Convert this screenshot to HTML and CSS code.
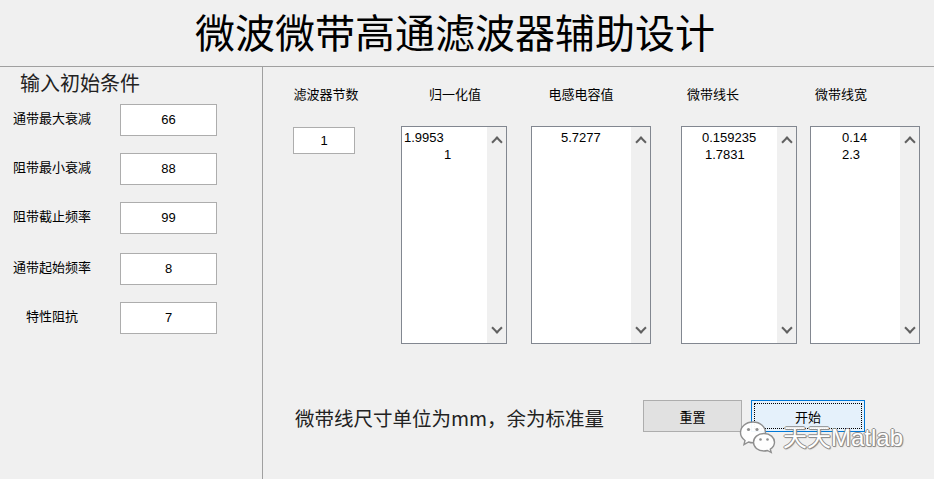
FILE: index.html
```html
<!DOCTYPE html>
<html lang="zh-CN">
<head>
<meta charset="utf-8">
<title>微波微带高通滤波器辅助设计</title>
<link rel="stylesheet" href="styles.css">
</head>
<body>
<div class="app">
  <header class="title">微波微带高通滤波器辅助设计</header>
  <div class="main">
    <section class="left">
      <h2 class="heading">输入初始条件</h2>
      <div class="rows">
        <div class="row"><span class="label">通带最大衰减</span><div class="edit">66</div></div>
        <div class="row"><span class="label">阻带最小衰减</span><div class="edit">88</div></div>
        <div class="row"><span class="label">阻带截止频率</span><div class="edit">99</div></div>
        <div class="row row-4"><span class="label">通带起始频率</span><div class="edit">8</div></div>
        <div class="row"><span class="label">特性阻抗</span><div class="edit">7</div></div>
      </div>
    </section>
    <section class="right">
      <div class="headers">
        <span class="hdr h1">滤波器节数</span>
        <span class="hdr h2">归一化值</span>
        <span class="hdr h3">电感电容值</span>
        <span class="hdr h4">微带线长</span>
        <span class="hdr h5">微带线宽</span>
      </div>
      <div class="controls">
        <div class="edit small">1</div>
        <div class="listbox lb1">
          <div class="items"><div class="it" style="padding-left:2px">1.9953</div><div class="it" style="padding-left:42px">1</div></div>
          <div class="sb"><span class="chev up"></span><span class="chev down"></span></div>
        </div>
        <div class="listbox lb2">
          <div class="items"><div class="it" style="padding-left:29px">5.7277</div></div>
          <div class="sb"><span class="chev up"></span><span class="chev down"></span></div>
        </div>
        <div class="listbox lb3">
          <div class="items"><div class="it" style="padding-left:20px">0.159235</div><div class="it" style="padding-left:23px">1.7831</div></div>
          <div class="sb"><span class="chev up"></span><span class="chev down"></span></div>
        </div>
        <div class="listbox lb4">
          <div class="items"><div class="it" style="padding-left:31px">0.14</div><div class="it" style="padding-left:31px">2.3</div></div>
          <div class="sb"><span class="chev up"></span><span class="chev down"></span></div>
        </div>
      </div>
      <div class="bottom">
        <span class="note">微带线尺寸单位为mm，余为标准量</span>
        <button class="btn reset">重置</button>
        <button class="btn start"><span class="focus">开始</span></button>
      </div>
    </section>
  </div>
  <div class="watermark">
    <svg class="wx" width="38" height="34" viewBox="0 0 38 34">
      <g fill="#fff" stroke="#8a8a8a" stroke-width="1.4">
        <path d="M14 2 C6.5 2 1.5 7 1.5 12.5 C1.5 15.8 3.3 18.6 6 20.5 L5 24.5 L9.6 22 C11 22.5 12.5 22.8 14 22.8 C21.5 22.8 26.5 18 26.5 12.5 C26.5 7 21.5 2 14 2 Z"/>
        <path d="M25 13.5 C18.8 13.5 14.5 17.6 14.5 22.3 C14.5 27 18.8 31 25 31 C26.2 31 27.3 30.8 28.4 30.5 L32.2 32.5 L31.3 29.2 C33.9 27.6 35.5 25.1 35.5 22.3 C35.5 17.6 31.2 13.5 25 13.5 Z"/>
      </g>
      <g fill="#8a8a8a">
        <circle cx="9.5" cy="9.5" r="1.6"/><circle cx="18" cy="9.5" r="1.6"/>
        <circle cx="21.5" cy="19.5" r="1.3"/><circle cx="28.5" cy="19.5" r="1.3"/>
      </g>
    </svg>
    <span class="wm-text">天天Matlab</span>
  </div>
</div>
</body>
</html>
```
FILE: styles.css
```css
html, body {
  margin: 0;
  padding: 0;
  background: #f0f0f0;
}
.app {
  position: relative;
  width: 934px;
  height: 479px;
  overflow: hidden;
  background: #f0f0f0;
  color: #000;
  font-family: "Noto Sans CJK SC", "Liberation Sans", sans-serif;
}
.title {
  height: 66px;
  line-height: 62px;
  padding-left: 195px;
  font-size: 40px;
  color: #000;
  border-bottom: 1px solid #a0a0a0;
  white-space: nowrap;
}
.main {
  display: flex;
  height: 412px;
}
.left {
  width: 262px;
  border-right: 1px solid #a0a0a0;
  flex: none;
}
.heading {
  margin: 0;
  padding: 4px 0 0 20px;
  height: 33px;
  font-size: 20px;
  line-height: 24px;
  font-weight: normal;
  color: #222;
}
.rows {
  display: flex;
  flex-direction: column;
  gap: 17px;
}
.row {
  display: flex;
  align-items: center;
}
.row-4 { margin-top: 2px; }
.label {
  width: 104px;
  text-align: center;
  font-size: 13px;
  line-height: 16px;
  margin-top: -4px;
}
.edit {
  box-sizing: border-box;
  width: 97px;
  height: 32px;
  margin-left: 16px;
  background: #fff;
  border: 1px solid #adadad;
  font-family: "Liberation Sans", sans-serif;
  font-size: 13px;
  line-height: 30px;
  text-align: center;
}
.right {
  flex: 1;
}
.headers {
  display: flex;
  padding-top: 18px;
  height: 17px;
}
.hdr {
  width: 100px;
  text-align: center;
  font-size: 13px;
  line-height: 17px;
  white-space: nowrap;
}
.h1 { margin-left: 13px; }
.h2 { margin-left: 29px; }
.h3 { margin-left: 26px; }
.h4 { margin-left: 32px; }
.h5 { margin-left: 28px; }
.controls {
  display: flex;
  align-items: flex-start;
  margin-top: 24px;
}
.edit.small {
  width: 62px;
  height: 27px;
  margin-left: 30px;
  margin-top: 1px;
  line-height: 25px;
}
.listbox {
  box-sizing: border-box;
  height: 218px;
  border: 1px solid #828790;
  background: #fff;
  display: flex;
}
.lb1 { width: 106px; margin-left: 46px; }
.lb2 { width: 120px; margin-left: 24px; }
.lb3 { width: 116px; margin-left: 30px; }
.lb4 { width: 110px; margin-left: 13px; }
.items {
  flex: 1;
  padding-top: 2px;
  font-family: "Liberation Sans", sans-serif;
  font-size: 13px;
  line-height: 17px;
}
.it { white-space: pre; }
.sb {
  width: 19px;
  background: #f0f0f0;
  display: flex;
  flex-direction: column;
  justify-content: space-between;
  align-items: center;
  padding: 9px 0 9px;
}
.chev {
  width: 6px;
  height: 6px;
  border-left: 2px solid #606060;
  border-top: 2px solid #606060;
}
.chev.up { transform: rotate(45deg); margin-top: 2px; }
.chev.down { transform: rotate(225deg); margin-bottom: 2px; }
.bottom {
  display: flex;
  align-items: center;
  margin-top: 56px;
}
.note {
  width: 312px;
  margin-left: 32px;
  font-size: 19.5px;
  line-height: 24px;
  color: #222;
  white-space: nowrap;
  margin-top: 3px;
}
.btn {
  box-sizing: border-box;
  height: 32px;
  padding: 0;
  font-family: "Noto Sans CJK SC", sans-serif;
  font-size: 13px;
  color: #000;
}
.reset {
  width: 99px;
  margin-left: 36px;
  background: #e1e1e1;
  border: 1px solid #adadad;
}
.start {
  width: 114px;
  margin-left: 9px;
  background: #e5f1fb;
  border: 1px solid #0078d7;
  padding: 2px;
}
.focus {
  display: flex;
  align-items: center;
  justify-content: center;
  height: 100%;
  box-sizing: border-box;
  border: 1px dotted #000;
}
.watermark {
  position: absolute;
  left: 739px;
  top: 420px;
  display: flex;
  align-items: center;
  opacity: 0.95;
}
.wm-text {
  margin-left: 6px;
  font-family: "Liberation Sans", "Noto Sans CJK SC", sans-serif;
  font-size: 24px;
  line-height: 28px;
  color: #fff;
  margin-top: 2px;
  text-shadow: 1px 0 0 #8a8a8a, -1px 0 0 #8a8a8a, 0 1px 0 #8a8a8a, 0 -1px 0 #8a8a8a, 1px 1px 1px #777;
}
```
